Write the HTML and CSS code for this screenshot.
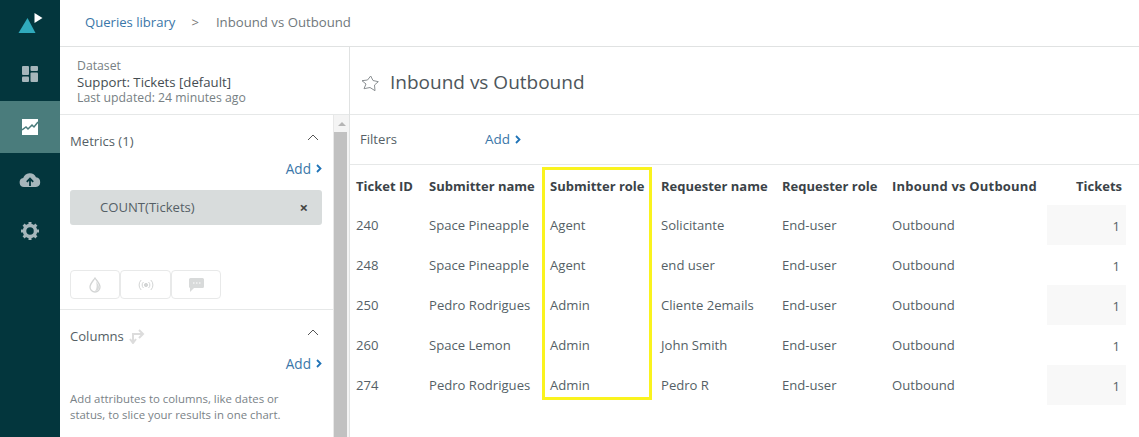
FILE: index.html
```html
<!DOCTYPE html>
<html>
<head>
<meta charset="UTF-8">
<title>Inbound vs Outbound</title>
<link rel="stylesheet" href="styles.css">
</head>
<body>
<div class="app">
  <nav class="sidebar">
    <div class="nav-logo">
      <svg width="28" height="24" viewBox="0 0 28 24"><path d="M9.500 7L17.500 22H0.500z" fill="#30aabc"/><path d="M16.500 2l8 5-8 5z" fill="#fff"/></svg>
    </div>
    <div class="nav-item">
      <svg width="16" height="16" viewBox="0 0 16 16" fill="#a6b6bb"><rect width="7" height="9" rx="1"/><rect y="10.500" width="7" height="5.500" rx="1"/><rect x="8.500" width="7.500" height="5" rx="1"/><rect x="8.500" y="6.500" width="7.500" height="9.500" rx="1"/></svg>
    </div>
    <div class="nav-item nav-active">
      <svg width="16" height="16" viewBox="0 0 16 16"><rect width="16" height="16" fill="#fff"/><path d="M0 11l4-3 2 2 4-4 2 2 4-5" fill="none" stroke="#4a7c7c" stroke-width="1.500"/></svg>
    </div>
    <div class="nav-item">
      <svg width="22" height="16" viewBox="0 0 22 16"><path d="M5 16a4.500 4.500 0 0 1-.8-8.900A6.800 6.800 0 0 1 17 6.300 4.900 4.900 0 0 1 17 16z" fill="#a6b6bb"/><path d="M11 15V8.500M7.800 10.800L11 7.500l3.200 3.300" fill="none" stroke="#03363d" stroke-width="1.800"/></svg>
    </div>
    <div class="nav-item">
      <svg width="18" height="18" viewBox="0 0 18 18"><circle cx="9" cy="9" r="5.500" fill="none" stroke="#a6b6bb" stroke-width="3.500"/><path d="M9 0v3M9 15v3M0 9h3M15 9h3M2.600 2.600l2.100 2.100M13.300 13.300l2.100 2.100M2.600 15.400l2.100-2.100M13.300 4.700l2.100-2.100" stroke="#a6b6bb" stroke-width="3"/></svg>
    </div>
  </nav>
  <div class="main">
    <header class="topbar">
      <a class="link">Queries library</a>
      <span class="crumb-sep">&gt;</span>
      <span class="crumb">Inbound vs Outbound</span>
    </header>
    <div class="workspace">
      <aside class="panel">
        <div class="dataset">
          <div class="muted">Dataset</div>
          <div class="dataset-name">Support: Tickets [default]</div>
          <div class="muted">Last updated: 24 minutes ago</div>
        </div>
        <div class="panel-scroll">
          <div class="panel-body">
            <section class="metrics">
              <div class="section-head">
                <span>Metrics (1)</span>
                <svg class="caret" width="12" height="7" viewBox="0 0 12 7"><path d="M1 6l5-5 5 5" fill="none" stroke="#555" stroke-width="1"/></svg>
              </div>
              <div class="add-row"><a class="link">Add</a><svg class="chev" width="6" height="9" viewBox="0 0 6 9"><path d="M1 1l3.500 3.500L1 8" fill="none" stroke="#1f73b7" stroke-width="1.800"/></svg></div>
              <div class="pill"><span>COUNT(Tickets)</span><span class="pill-x">&#215;</span></div>
              <div class="viz-buttons">
                <div class="viz-btn"><svg width="12" height="16" viewBox="0 0 12 16"><path d="M6 1C4 4 1 7 1 10a5 5 0 0 0 10 0C11 7 8 4 6 1z" fill="none" stroke="#d3d5d5" stroke-width="1.300"/><path d="M6 14a4 4 0 0 0 4-4C10 8 8 6 7 4.500 8 8 8 12 6 14z" fill="#d8dada"/></svg></div>
                <div class="viz-btn wide"><svg width="16" height="12" viewBox="0 0 16 12" fill="none" stroke="#d3d5d5" stroke-width="1"><circle cx="8" cy="6" r="1.600" fill="#d3d5d5"/><path d="M5.500 3a4 4 0 0 0 0 6M10.500 3a4 4 0 0 1 0 6M3.200 1a7 7 0 0 0 0 10M12.800 1a7 7 0 0 1 0 10"/></svg></div>
                <div class="viz-btn"><svg width="15" height="14" viewBox="0 0 15 14"><path d="M1.500 0h12A1.500 1.500 0 0 1 15 1.500v7a1.500 1.500 0 0 1-1.500 1.500H5l-4 4V10A1.500 1.500 0 0 1 0 8.500v-7A1.500 1.500 0 0 1 1.500 0z" fill="#d8dada"/><path d="M4 5h1.500M7 5h1.500M10 5h1.500" stroke="#fff" stroke-width="1.200"/></svg></div>
              </div>
            </section>
            <section class="columns">
              <div class="section-head">
                <span class="columns-title">Columns
                  <svg width="16" height="16" viewBox="0 0 16 16" fill="none" stroke="#dcdcdc" stroke-width="2"><path d="M4 15V6h9M10 2l4 4-4 4M1 11l3 4 3-4"/></svg>
                </span>
                <svg class="caret" width="12" height="7" viewBox="0 0 12 7"><path d="M1 6l5-5 5 5" fill="none" stroke="#555" stroke-width="1"/></svg>
              </div>
              <div class="add-row"><a class="link">Add</a><svg class="chev" width="6" height="9" viewBox="0 0 6 9"><path d="M1 1l3.500 3.500L1 8" fill="none" stroke="#1f73b7" stroke-width="1.800"/></svg></div>
              <p class="hint">Add attributes to columns, like dates or status, to slice your results in one chart.</p>
            </section>
          </div>
          <div class="scrollbar">
            <div class="scroll-up"></div>
            <div class="scroll-thumb"></div>
          </div>
        </div>
      </aside>
      <div class="content">
        <div class="title-row">
          <svg class="star" width="18" height="17" viewBox="0 0 18 17"><path d="M9.700 1L12 5.500l5.300 1.200L13.500 10l.5 5.700-5-3.200-6 1.200 2-4.700-4-3.300 5.500-.7z" fill="none" stroke="#8a8f92" stroke-width="1"/></svg>
          <h1>Inbound vs Outbound</h1>
        </div>
        <div class="filters">
          <span class="filters-label">Filters</span>
          <a class="link">Add</a><svg class="chev" width="6" height="9" viewBox="0 0 6 9"><path d="M1 1l3.500 3.500L1 8" fill="none" stroke="#1f73b7" stroke-width="1.800"/></svg>
        </div>
        <div class="table-wrap">
          <table class="results">
            <colgroup>
              <col class="c-id"><col class="c-sname"><col class="c-srole"><col class="c-rname"><col class="c-rrole"><col class="c-dir"><col class="c-num">
            </colgroup>
            <thead>
              <tr><th>Ticket ID</th><th>Submitter name</th><th>Submitter role</th><th>Requester name</th><th>Requester role</th><th class="th-wide">Inbound vs Outbound</th><th class="num">Tickets</th></tr>
            </thead>
            <tbody>
              <tr><td>240</td><td>Space Pineapple</td><td>Agent</td><td>Solicitante</td><td>End-user</td><td>Outbound</td><td class="num shade">1</td></tr>
              <tr><td>248</td><td>Space Pineapple</td><td>Agent</td><td>end user</td><td>End-user</td><td>Outbound</td><td class="num">1</td></tr>
              <tr><td>250</td><td>Pedro Rodrigues</td><td>Admin</td><td>Cliente 2emails</td><td>End-user</td><td>Outbound</td><td class="num shade">1</td></tr>
              <tr><td>260</td><td>Space Lemon</td><td>Admin</td><td>John Smith</td><td>End-user</td><td>Outbound</td><td class="num">1</td></tr>
              <tr><td>274</td><td>Pedro Rodrigues</td><td>Admin</td><td>Pedro R</td><td>End-user</td><td>Outbound</td><td class="num shade">1</td></tr>
            </tbody>
          </table>
          <div class="highlight"></div>
        </div>
      </div>
    </div>
  </div>
</div>
</body>
</html>
```

FILE: styles.css
```css
* {
  box-sizing: border-box;
}
html, body {
  margin: 0;
  height: 100%;
  overflow: hidden;
}
body {
  font-family: "Open Sans", "Liberation Sans", sans-serif;
  font-size: 13.100px;
  color: #555f66;
  background: #fff;
}
.app {
  display: flex;
  height: 437px;
}
.link {
  color: #3a76a8;
}

.sidebar {
  width: 60px;
  flex: none;
  background: #03363d;
}
.nav-logo {
  height: 47px;
  display: flex;
  justify-content: center;
  padding: 11px 0 0 3px;
}
.nav-item {
  height: 52px;
  display: flex;
  align-items: center;
  justify-content: center;
}
.nav-logo + .nav-item {
  height: 54px;
}
.nav-active {
  background: #4a7c7c;
}

.main {
  flex: 1;
  min-width: 0;
  display: flex;
  flex-direction: column;
}
.topbar {
  height: 47px;
  flex: none;
  display: flex;
  align-items: center;
  padding: 0 0 2px 25px;
  border-bottom: 1px solid #e0e2e2;
}
.crumb-sep {
  margin: 0 17px 0 16px;
  color: #777;
}
.crumb {
  color: #70787c;
  font-size: 13.200px;
}

.workspace {
  flex: 1;
  display: flex;
  min-height: 0;
}
.panel {
  width: 290px;
  flex: none;
  display: flex;
  flex-direction: column;
  border-right: 1px solid #e0e2e2;
}
.dataset {
  height: 68px;
  flex: none;
  padding: 11px 0 0 17px;
  line-height: 16px;
  font-size: 12.250px;
  border-bottom: 1px solid #e6e8e8;
}
.muted {
  color: #777f84;
}
.dataset-name {
  color: #454d52;
  font-size: 13.200px;
}
.panel-scroll {
  flex: 1;
  display: flex;
  min-height: 0;
}
.panel-body {
  flex: 1;
  min-width: 0;
}
.scrollbar {
  width: 16px;
  background: #f4f4f4;
  border-left: 1px solid #e8e8e8;
}
.scroll-up {
  height: 17px;
  padding-top: 7px;
}
.scroll-up::before {
  content: "";
  display: block;
  width: 0;
  margin: 0 auto;
  border: 4px solid transparent;
  border-top: 0;
  border-bottom: 4px solid #b5b5b5;
}
.scroll-thumb {
  height: 305px;
  background: #c1c1c1;
  margin-right: 2px;
}

.metrics {
  height: 195px;
  padding: 16px 11px 0 10px;
  border-bottom: 1px solid #e6e8e8;
}
.section-head {
  display: flex;
  justify-content: space-between;
  align-items: flex-start;
  height: 20px;
  line-height: 20px;
  color: #555f66;
}
.caret {
  margin: 3px 3px 0 0;
}
.add-row {
  display: flex;
  justify-content: flex-end;
  align-items: center;
  margin-top: 8px;
  height: 18px;
  font-size: 13.600px;
}
.chev {
  margin-left: 5px;
}
.pill {
  height: 35px;
  margin-top: 13px;
  padding: 0 14px 2px 30px;
  display: flex;
  justify-content: space-between;
  align-items: center;
  background: #d8dcdc;
  border-radius: 3px;
  color: #555f66;
}
.pill-x {
  font-size: 15px;
  font-weight: 700;
  color: #444;
}
.viz-buttons {
  display: flex;
  margin-top: 45px;
}
.viz-btn {
  width: 50px;
  height: 29px;
  display: flex;
  align-items: center;
  justify-content: center;
  border: 1px solid #e8e9e9;
  border-radius: 4px;
}
.viz-btn.wide {
  width: 51px;
}
.columns {
  padding: 16px 11px 0 10px;
}
.columns-title {
  display: flex;
  align-items: center;
  gap: 5px;
}
.hint {
  margin: 19px 0 0;
  font-size: 11.400px;
  line-height: 16px;
  color: #7a8287;
  width: 225px;
}

.content {
  flex: 1;
  min-width: 0;
}
.title-row {
  height: 68px;
  display: flex;
  align-items: center;
  gap: 11px;
  padding: 2px 0 0 11px;
  border-bottom: 1px solid #e6e8e8;
}
.star {
  margin-top: 4px;
}
.title-row h1 {
  margin: 0;
  font-size: 19px;
  font-weight: 400;
  color: #4e565b;
}
.filters {
  height: 50px;
  display: flex;
  align-items: center;
  padding: 0 0 1px 10px;
  border-bottom: 1px solid #e6e8e8;
}
.filters-label {
  width: 125px;
}
.filters .link {
  font-size: 13.500px;
}
.table-wrap {
  position: relative;
}
.results {
  border-collapse: collapse;
  table-layout: fixed;
  width: 776px;
}
.c-id { width: 73px; }
.c-sname { width: 121px; }
.c-srole { width: 111px; }
.c-rname { width: 121px; }
.c-rrole { width: 110px; }
.c-dir { width: 161px; }
.c-num { width: 79px; }
.results th, .results td {
  padding: 0 6px;
  text-align: left;
  white-space: nowrap;
}
.results th {
  height: 40px;
  padding-top: 2px;
  font-size: 13px;
  font-weight: 700;
  color: #3b4348;
}
.results .th-wide {
  letter-spacing: .2px;
}
.results td {
  height: 40px;
  padding-bottom: 1px;
}
.results .num {
  text-align: right;
  padding-right: 4px;
}
.results td.num {
  padding-right: 6px;
  padding-top: 2px;
}
.shade {
  background: #f8f8f8;
}
.highlight {
  position: absolute;
  left: 192px;
  top: 2px;
  width: 110px;
  height: 233px;
  border: 3px solid #faf31e;
}
```
